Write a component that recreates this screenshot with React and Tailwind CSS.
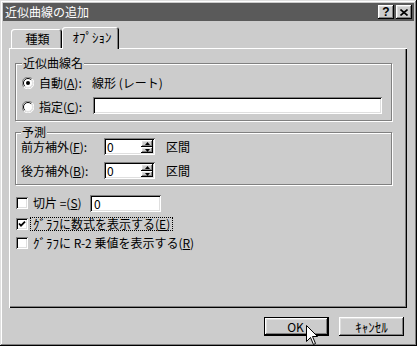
import React from 'react';

const raised =
  'shadow-[inset_-1px_-1px_#000,inset_1px_1px_#fff,inset_-2px_-2px_#808080,inset_2px_2px_#dfdfdf]';
const sunken =
  'shadow-[inset_1px_1px_#808080,inset_-1px_-1px_#fff,inset_2px_2px_#000,inset_-2px_-2px_#dfdfdf]';

const U = ({ children }) => <span className="underline underline-offset-[1px]">{children}</span>;

function TitleButton({ children }) {
  return (
    <div className={`w-[16px] h-[14px] bg-[#cccccc] ${raised} flex items-center justify-center`}>
      {children}
    </div>
  );
}

function Radio({ checked }) {
  return (
    <svg width="12" height="12" viewBox="0 0 12 12" className="shrink-0">
      <circle cx="6" cy="6" r="5" fill="#fff" />
      <path d="M10.2 1.8 A5.9 5.9 0 0 0 1.8 10.2" stroke="#808080" fill="none" />
      <path d="M1.8 10.2 A5.9 5.9 0 0 0 10.2 1.8" stroke="#fff" fill="none" />
      <path d="M9.2 2.8 A4.5 4.5 0 0 0 2.8 9.2" stroke="#000" fill="none" />
      <path d="M2.8 9.2 A4.5 4.5 0 0 0 9.2 2.8" stroke="#dfdfdf" fill="none" />
      {checked && <circle cx="6" cy="6" r="2" fill="#000" />}
    </svg>
  );
}

function Checkbox({ checked }) {
  return (
    <div className={`w-[12px] h-[12px] shrink-0 bg-white ${sunken} flex items-center justify-center`}>
      {checked && (
        <svg width="8" height="8" viewBox="0 0 8 8">
          <path d="M1 3.5 L3 5.6 L7 1.6" stroke="#000" strokeWidth="1.8" fill="none" />
        </svg>
      )}
    </div>
  );
}

function Spinner() {
  return (
    <div className={`w-[51px] h-[17px] bg-white ${sunken} flex items-stretch p-[2px]`}>
      <span className="pl-[1px] leading-[13px]">0</span>
      <div className="ml-auto flex flex-col w-[12px]">
        <div className={`h-[7px] bg-[#cccccc] ${raised} flex items-center justify-center`}>
          <svg width="5" height="3" viewBox="0 0 5 3">
            <path d="M2.5 0 L5 3 L0 3 Z" fill="#000" />
          </svg>
        </div>
        <div className={`h-[6px] bg-[#cccccc] ${raised} flex items-center justify-center`}>
          <svg width="5" height="3" viewBox="0 0 5 3">
            <path d="M0 0 L5 0 L2.5 3 Z" fill="#000" />
          </svg>
        </div>
      </div>
    </div>
  );
}

export default function App() {
  return (
    <div className="relative w-[417px] h-[346px] bg-[#cccccc] p-[3px] flex flex-col text-[12px] leading-[14px] text-black font-['Noto_Sans_CJK_JP',sans-serif] shadow-[inset_-1px_-1px_#000,inset_1px_1px_#dfdfdf,inset_-2px_-2px_#808080,inset_2px_2px_#fff]">
      {/* title bar */}
      <div className="h-[18px] bg-[#5a5a5a] flex items-center pl-[2px] pr-[2px]">
        <span className="text-white">近似曲線の追加</span>
        <div className="ml-auto flex gap-[2px]">
          <TitleButton>
            <span className="font-bold text-[12px] leading-none font-['Liberation_Sans',sans-serif]">?</span>
          </TitleButton>
          <TitleButton>
            <svg width="8" height="7" viewBox="0 0 8 7">
              <path d="M0.5 0.5 L7.5 6.5 M7.5 0.5 L0.5 6.5" stroke="#000" strokeWidth="1.6" />
            </svg>
          </TitleButton>
        </div>
      </div>

      {/* tabs */}
      <div className="relative z-10 flex items-end h-[27px] pl-[8px]">
        <div className="w-[51px] h-[19px] rounded-t-[3px] shadow-[inset_1px_1px_#fff,inset_-1px_0_#000,inset_-2px_0_#808080] flex items-center justify-center pl-[2px]">
          種類
        </div>
        <div className="w-[57px] h-[22px] -mb-[1px] bg-[#cccccc] rounded-t-[3px] shadow-[inset_1px_1px_#fff,inset_-1px_0_#000,inset_-2px_0_#808080] flex items-center justify-center pl-[3px] pb-[2px] text-[13px]">
          ｵﾌﾟｼｮﾝ
        </div>
      </div>

      {/* tab panel */}
      <div className="ml-[6px] w-[398px] h-[260px] pt-[8px] pl-[6px] shadow-[inset_1px_1px_#fff,inset_-1px_-1px_#000,inset_-2px_-2px_#808080]">
        <fieldset className="w-[377px] border border-[#808080] shadow-[inset_1px_1px_#fff,1px_1px_#fff] px-[6px] pb-[6px]">
          <legend className="px-[1px] bg-[#cccccc]">近似曲線名</legend>
          <div className="flex items-center h-[14px] mt-[6px]">
            <Radio checked />
            <span className="ml-[5px] w-[53px]">
              自動(<U>A</U>):
            </span>
            <span>線形 (レート)</span>
          </div>
          <div className="flex items-end h-[17px] mt-[7px]">
            <div className="mb-[1px]">
              <Radio />
            </div>
            <span className="ml-[5px] w-[54px]">
              指定(<U>C</U>):
            </span>
            <div className={`w-[289px] h-[17px] bg-white ${sunken}`} />
          </div>
        </fieldset>

        <fieldset className="mt-[5px] w-[377px] border border-[#808080] shadow-[inset_1px_1px_#fff,1px_1px_#fff] pl-[5px] pb-[5px]">
          <legend className="px-[1px] bg-[#cccccc] leading-[12px]">予測</legend>
          <div className="flex items-center h-[17px] leading-[12px]">
            <span className="w-[83px]">
              前方補外(<U>F</U>):
            </span>
            <Spinner />
            <span className="ml-[11px]">区間</span>
          </div>
          <div className="flex items-center h-[17px] mt-[7px] leading-[12px]">
            <span className="w-[83px]">
              後方補外(<U>B</U>):
            </span>
            <Spinner />
            <span className="ml-[11px]">区間</span>
          </div>
        </fieldset>

        <div className="mt-[9px] pl-[1px] flex flex-col">
          <div className="flex items-center h-[18px]">
            <Checkbox />
            <span className="ml-[5px] w-[57px]">
              切片 =(<U>S</U>)
            </span>
            <div className={`w-[71px] h-[17px] bg-white ${sunken} pl-[4px] pt-[2px] leading-[13px]`}>0</div>
          </div>
          <div className="flex items-center h-[14px] mt-[5px]">
            <Checkbox checked />
            <span className="ml-[2px] border border-dotted border-black px-[2px] leading-[12px]">
              <span className="text-[13px]">ｸﾞﾗﾌ</span>に数式を表示する(<U>E</U>)
            </span>
          </div>
          <div className="flex items-center h-[14px] mt-[5px]">
            <Checkbox />
            <span className="ml-[5px]">
              <span className="text-[13px]">ｸﾞﾗﾌ</span>に R-2 乗値を表示する(<U>R</U>)
            </span>
          </div>
        </div>
      </div>

      {/* buttons */}
      <div className="mt-[9px] flex justify-end gap-[10px] pr-[10px]">
        <div className="w-[65px] h-[19px] border border-black">
          <div className={`w-full h-full ${raised} flex items-center justify-center pr-[2px]`}>OK</div>
        </div>
        <div className={`w-[65px] h-[19px] ${raised} flex items-center justify-center text-[13px]`}>ｷｬﾝｾﾙ</div>
      </div>

      {/* mouse pointer over OK */}
      <svg width="12" height="20" viewBox="0 0 12 20" className="absolute left-[306px] top-[325px]">
        <path
          d="M0.5 0.5 L0.5 16.5 L4.5 12.5 L7.5 19.5 L9.5 18.5 L6.5 11.5 L11.5 11.5 Z"
          fill="#fff"
          stroke="#000"
          strokeWidth="1"
        />
      </svg>
    </div>
  );
}
